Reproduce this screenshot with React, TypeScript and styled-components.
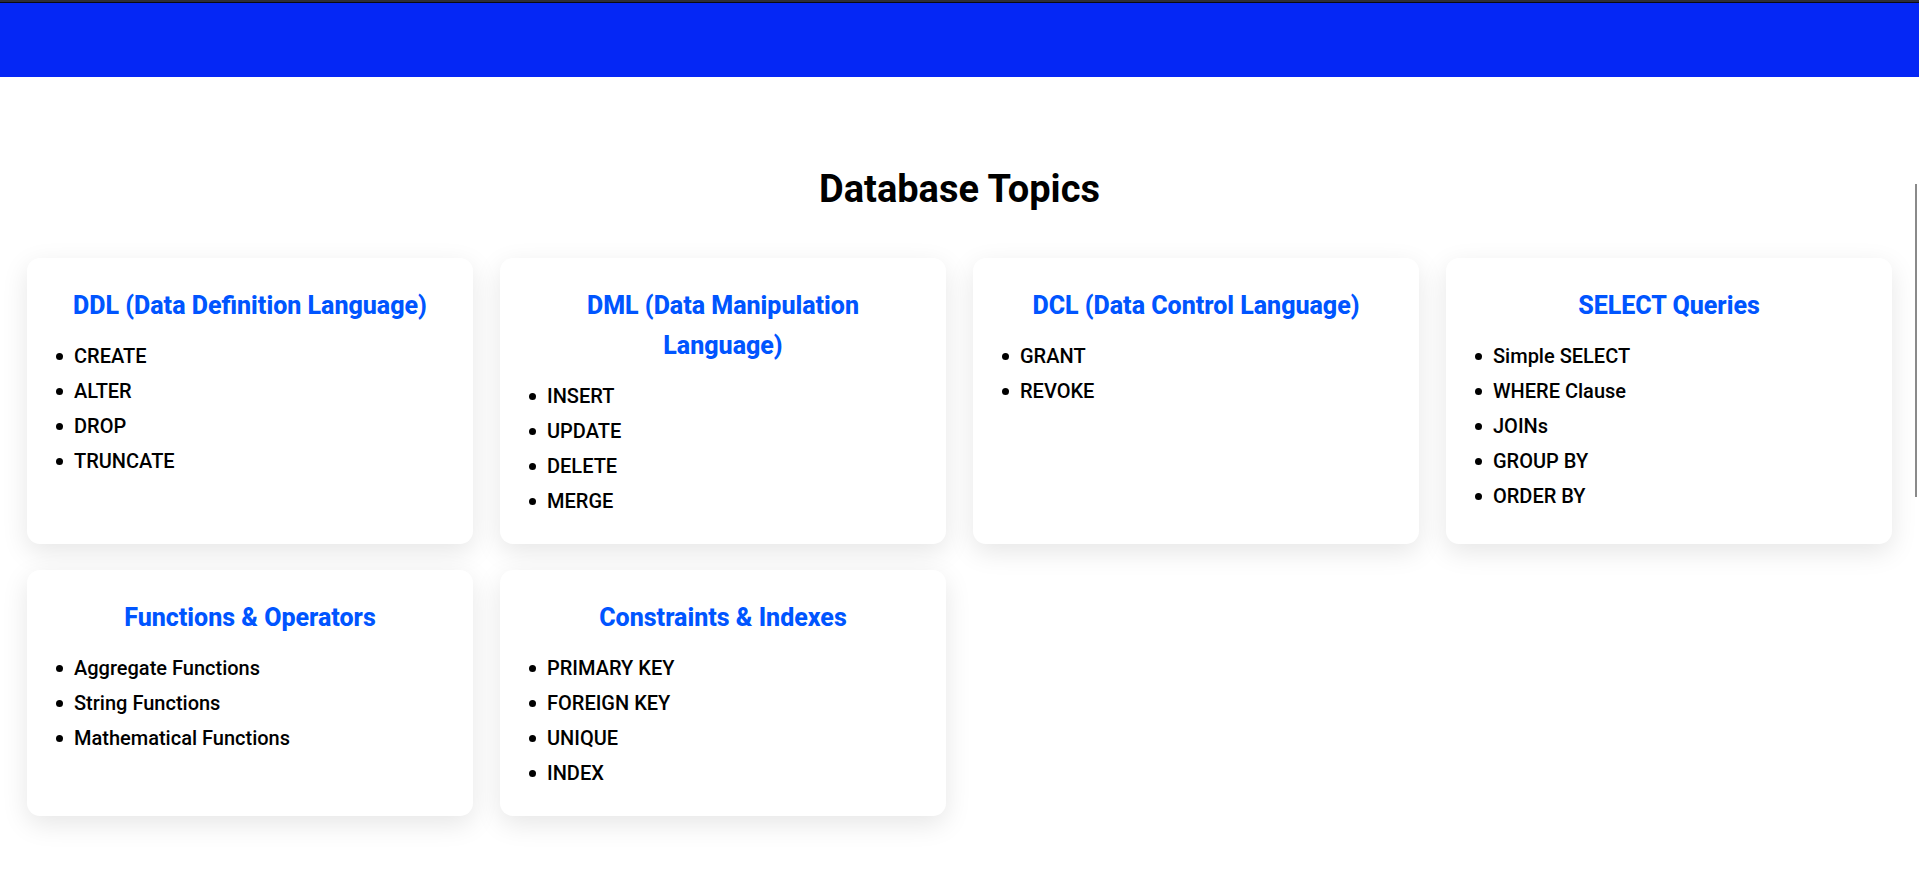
import React from 'react';
import styled, { createGlobalStyle } from 'styled-components';

const GlobalStyle = createGlobalStyle`
  * {
    box-sizing: border-box;
    margin: 0;
    padding: 0;
  }

  body {
    background: #fff;
    color: #000;
    font-family: Roboto, 'Liberation Sans', sans-serif;
    font-weight: 500;
    overflow-x: hidden;
  }
`;

const Banner = styled.header`
  height: 77px;
  background: #0527f5;
  border-top: 2px solid #2e2e36;
`;

const BannerEdge = styled.div`
  height: 1px;
  background: #0a0a14;
`;

const Topics = styled.main`
  padding: 82px 27px 80px;
`;

const Title = styled.h2`
  margin-bottom: 38px;
  font-size: 38px;
  line-height: 61px;
  font-weight: 700;
  text-align: center;
`;

const CardGrid = styled.div`
  display: grid;
  grid-template-columns: repeat(auto-fill, minmax(400px, 1fr));
  gap: 26px 27px;
`;

const Card = styled.section`
  padding: 28px 27px 25px;
  background: #fff;
  border-radius: 13px;
  box-shadow: 0 8px 27px rgba(0, 0, 0, 0.1);
`;

const CardTitle = styled.h3`
  margin-bottom: 13px;
  padding: 0 8px;
  color: #0055ff;
  font-size: 25px;
  line-height: 40px;
  font-weight: 800;
  text-align: center;
`;

const TopicList = styled.ul`
  padding-left: 2px;
  list-style: none;
`;

const TopicItem = styled.li`
  display: flex;
  align-items: center;
  gap: 11px;
  font-size: 20px;
  line-height: 35px;

  &::before {
    content: '';
    width: 7px;
    height: 7px;
    border-radius: 50%;
    background: #000;
  }
`;

const ScrollThumb = styled.div`
  position: fixed;
  top: 184px;
  right: 2px;
  width: 2px;
  height: 313px;
  background: #8a8a8a;
`;

const topics = [
  { title: 'DDL (Data Definition Language)', items: ['CREATE', 'ALTER', 'DROP', 'TRUNCATE'] },
  { title: 'DML (Data Manipulation Language)', items: ['INSERT', 'UPDATE', 'DELETE', 'MERGE'] },
  { title: 'DCL (Data Control Language)', items: ['GRANT', 'REVOKE'] },
  { title: 'SELECT Queries', items: ['Simple SELECT', 'WHERE Clause', 'JOINs', 'GROUP BY', 'ORDER BY'] },
  { title: 'Functions & Operators', items: ['Aggregate Functions', 'String Functions', 'Mathematical Functions'] },
  { title: 'Constraints & Indexes', items: ['PRIMARY KEY', 'FOREIGN KEY', 'UNIQUE', 'INDEX'] },
];

export default function App() {
  return (
    <>
      <GlobalStyle />
      <Banner>
        <BannerEdge />
      </Banner>
      <Topics>
        <Title>Database Topics</Title>
        <CardGrid>
          {topics.map((topic) => (
            <Card key={topic.title}>
              <CardTitle>{topic.title}</CardTitle>
              <TopicList>
                {topic.items.map((item) => (
                  <TopicItem key={item}>{item}</TopicItem>
                ))}
              </TopicList>
            </Card>
          ))}
        </CardGrid>
      </Topics>
      <ScrollThumb />
    </>
  );
}
